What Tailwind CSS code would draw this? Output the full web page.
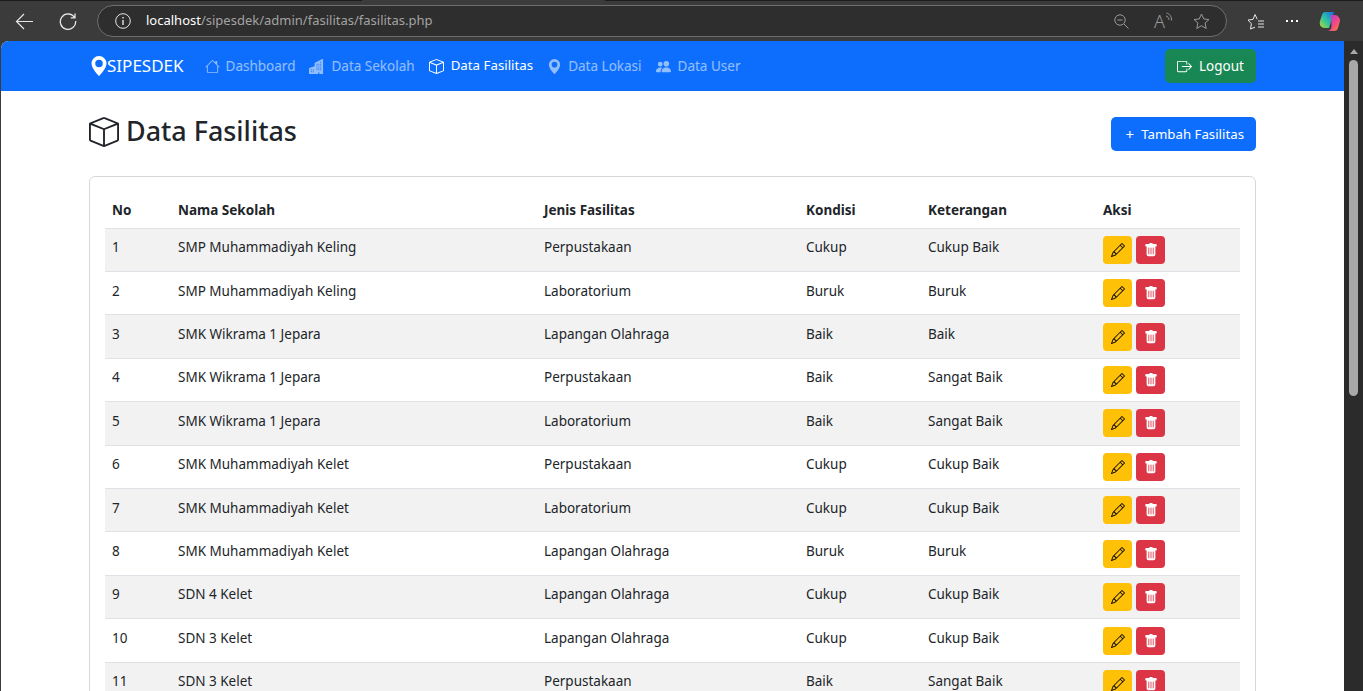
<!DOCTYPE html>
<html lang="en">
<head>
  <meta charset="UTF-8" />
  <title>Data Fasilitas</title>
  <script src="https://cdn.jsdelivr.net/npm/@tailwindcss/browser@4"></script>
</head>
<body class="h-screen overflow-hidden bg-[#3b3b3b] font-['Noto_Sans',sans-serif] text-[13.5px] text-[#212529]">
  <!-- Browser toolbar -->
  <div class="h-px flex"><div class="w-[362px] bg-[#1c1c1c]"></div><div class="w-[243px]"></div><div class="flex-1 bg-[#1c1c1c]"></div></div>
  <div class="h-[40px] flex items-center text-[#e6e6e6]">
    <svg class="ml-[15px] w-[19px] h-[19px]" viewBox="0 0 19 19" fill="none" stroke="currentColor" stroke-width="1.2"><path d="M18 9.500H1.500M9 2 1.500 9.500 9 17"/></svg>
    <svg class="ml-[25px] w-[18px] h-[18px]" viewBox="0 0 18 18" fill="none" stroke="currentColor" stroke-width="1.3"><path d="M15.500 5.500A7.700 7.700 0 1 0 16.700 9M16 1.500v4.300h-4.300"/></svg>
    <div class="ml-[20px] w-[1130px] h-[32px] rounded-full border border-[#6e6e6e] bg-[#2e2e2e] flex items-center">
      <svg class="ml-[17px] w-[16px] h-[16px]" viewBox="0 0 16 16" fill="none" stroke="currentColor"><circle cx="8" cy="8" r="7.300"/><path d="M8 7v5M8 4v1.500" stroke-width="1.400"/></svg>
      <span class="ml-[15px] text-[13px] text-white">localhost<span class="text-[#a3a3a3]">/sipesdek/admin/fasilitas/fasilitas.php</span></span>
      <svg class="ml-auto w-[15px] h-[15px] text-[#9a9a9a]" viewBox="0 0 15 15" fill="none" stroke="currentColor"><circle cx="6" cy="6" r="5.200"/><path d="M3.500 6h5M10 10l4.500 4.500"/></svg>
      <span class="ml-[25px] text-[18px] leading-none font-light text-[#9a9a9a]">A</span>
      <svg class="mb-[8px] w-[8px] h-[10px] text-[#9a9a9a]" viewBox="0 0 8 10" fill="none" stroke="currentColor"><path d="M1 4c1.700.3 2.800 1.800 3.100 4M1.500 1c3 .5 5 3.400 5.200 7.500"/></svg>
      <svg class="ml-[20px] mr-[16px] w-[17px] h-[17px] text-[#9a9a9a]" viewBox="0 0 17 17" fill="none" stroke="currentColor"><path d="m8.500 1 2.300 5 5.200.5-3.900 3.500 1.100 5.500-4.700-2.800L3.800 15.500 4.900 10 1 6.500 6.200 6z"/></svg>
    </div>
    <svg class="ml-[20px] w-[17px] h-[17px]" viewBox="0 0 17 17" fill="none" stroke="currentColor"><path d="M8 14.200 3.500 16l.9-5.200L1 7l5-.6L8 1.500l2.200 4.700M11 8h6M11 11h6M11 14h6"/></svg>
    <div class="ml-[22px] flex gap-[3px]"><i class="w-[2px] h-[2px] bg-white"></i><i class="w-[2px] h-[2px] bg-white"></i><i class="w-[2px] h-[2px] bg-white"></i></div>
    <svg class="ml-[21px] w-[22px] h-[22px]" viewBox="0 0 22 22">
      <defs>
        <linearGradient id="cpa" x1="0" y1="1" x2="1" y2="0"><stop offset="0" stop-color="#b6d92e"/><stop offset=".45" stop-color="#2fc4a0"/><stop offset="1" stop-color="#1668e8"/></linearGradient>
        <linearGradient id="cpb" x1="0" y1="0" x2="1" y2="1"><stop offset="0" stop-color="#a33be0"/><stop offset=".55" stop-color="#f0468c"/><stop offset="1" stop-color="#f78a2a"/></linearGradient>
      </defs>
      <path d="M6 2h9l-5 16H6C2 18 0 15 1 11l2-6c.5-2 1.500-3 3-3z" fill="url(#cpa)"/>
      <path d="M12 5h4c3 0 5 3 5 6l-2 7c-.5 2-2 3-4 3H8c3 0 4-2 4.500-4z" fill="url(#cpb)"/>
    </svg>
  </div>

  <div class="flex h-[650px]">
    <!-- Page -->
    <div class="ml-px w-[1343px] bg-white rounded-tl-lg overflow-hidden">
      <nav class="h-[50px] bg-[#0d6efd] flex items-center pl-[90px] pr-[88px]">
        <a class="flex items-center text-white text-[17px]">
          <svg class="w-[16px] h-[20px]" viewBox="2 0 12 16" fill="currentColor"><path d="M8 16s6-5.686 6-10A6 6 0 0 0 2 6c0 4.314 6 10 6 10zm0-7a3 3 0 1 1 0-6 3 3 0 0 1 0 6z"/></svg>SIPESDEK
        </a>
        <div class="ml-[21px] flex items-center gap-[14px] text-white/55">
          <a class="flex items-center gap-[6px]"><svg class="w-[15px] h-[15px]" viewBox="0 0 16 16" fill="currentColor"><path d="M8.707 1.500a1 1 0 0 0-1.414 0L.646 8.146a.5.5 0 0 0 .708.708L2 8.207V13.500A1.500 1.500 0 0 0 3.500 15h9a1.500 1.500 0 0 0 1.500-1.500V8.207l.646.647a.5.5 0 0 0 .708-.708L13 5.793V2.500a.5.5 0 0 0-.5-.5h-1a.5.5 0 0 0-.5.5v1.293L8.707 1.500ZM13 7.207V13.500a.5.5 0 0 1-.5.5h-9a.5.5 0 0 1-.5-.5V7.207l5-5 5 5Z"/></svg>Dashboard</a>
          <a class="flex items-center gap-[7px]"><svg class="w-[15px] h-[15px]" viewBox="0 0 16 16" fill="currentColor"><path d="M15 .5a.5.5 0 0 0-.724-.447l-8 4A.5.5 0 0 0 6 4.500v3.140L.342 9.526A.5.5 0 0 0 0 10v5.500a.5.5 0 0 0 .5.5h9a.5.5 0 0 0 .5-.5V14h1v1.500a.5.5 0 0 0 .5.5h3a.5.5 0 0 0 .5-.5V.5ZM2 11h1v1H2v-1Zm2 0h1v1H4v-1Zm-1 2v1H2v-1h1Zm1 0h1v1H4v-1Zm9-10v1h-1V3h1ZM8 5h1v1H8V5Zm1 2v1H8V7h1ZM8 9h1v1H8V9Zm2 0h1v1h-1V9Zm-1 2v1H8v-1h1Zm1 0h1v1h-1v-1Zm3-2v1h-1V9h1Zm-1 2h1v1h-1v-1Zm-2-4h1v1h-1V7Zm3 0v1h-1V7h1Zm-2-2v1h-1V5h1Zm1 0h1v1h-1V5Z"/></svg>Data Sekolah</a>
          <a class="flex items-center gap-[7px] text-white text-[13.3px]"><svg class="w-[15px] h-[15px]" viewBox="0 0 16 16" fill="currentColor"><path d="M8.186 1.113a.5.5 0 0 0-.372 0L1.846 3.500 8 5.961 14.154 3.500 8.186 1.113zM15 4.239l-6.500 2.600v7.922l6.500-2.600V4.240zM7.500 14.762V6.838L1 4.239v7.923l6.500 2.600zM7.443.184a1.500 1.500 0 0 1 1.114 0l7.129 2.852A.5.5 0 0 1 16 3.500v8.662a1 1 0 0 1-.629.928l-7.185 2.874a.5.5 0 0 1-.372 0L.63 13.090a1 1 0 0 1-.63-.928V3.500a.5.5 0 0 1 .314-.464L7.443.184z"/></svg>Data Fasilitas</a>
          <a class="flex items-center gap-[6px]"><svg class="w-[15px] h-[15px]" viewBox="0 0 16 16" fill="currentColor"><path d="M8 16s6-5.686 6-10A6 6 0 0 0 2 6c0 4.314 6 10 6 10zm0-7a3 3 0 1 1 0-6 3 3 0 0 1 0 6z"/></svg>Data Lokasi</a>
          <a class="flex items-center gap-[7px]"><svg class="w-[15px] h-[15px]" viewBox="0 0 16 16" fill="currentColor"><path d="M7 14s-1 0-1-1 1-4 5-4 5 3 5 4-1 1-1 1H7Zm4-6a3 3 0 1 0 0-6 3 3 0 0 0 0 6Zm-5.784 6A2.238 2.238 0 0 1 5 13c0-1.355.68-2.750 1.936-3.720A6.325 6.325 0 0 0 5 9c-4 0-5 3-5 4s1 1 1 1h4.216ZM4.500 8a2.500 2.500 0 1 0 0-5 2.500 2.500 0 0 0 0 5Z"/></svg>Data User</a>
        </div>
        <a class="ml-auto h-[34px] w-[91px] rounded-[5px] bg-[#198754] text-white flex items-center justify-center gap-[7px]"><svg class="w-[15px] h-[15px]" viewBox="0 0 16 16" fill="currentColor"><path d="M10 12.500a.5.5 0 0 1-.5.5h-8a.5.5 0 0 1-.5-.5v-9a.5.5 0 0 1 .5-.5h8a.5.5 0 0 1 .5.5v2a.5.5 0 0 0 1 0v-2A1.500 1.500 0 0 0 9.500 2h-8A1.500 1.500 0 0 0 0 3.500v9A1.500 1.500 0 0 0 1.500 14h8a1.500 1.500 0 0 0 1.500-1.500v-2a.5.5 0 0 0-1 0v2z"/><path d="M15.854 8.354a.5.5 0 0 0 0-.708l-3-3a.5.5 0 0 0-.708.708L14.293 7.500H5.500a.5.5 0 0 0 0 1h8.793l-2.147 2.146a.5.5 0 0 0 .708.708l3-3z"/></svg>Logout</a>
      </nav>

      <main class="pl-[88px] pr-[88px]">
        <div class="h-[85px] flex items-center justify-between">
          <h1 class="flex items-center gap-[7px] text-[26.9px] font-medium leading-none -mt-[4px]">
            <svg class="w-[30px] h-[30px]" viewBox="0 0 16 16" fill="currentColor"><path d="M8.186 1.113a.5.5 0 0 0-.372 0L1.846 3.500 8 5.961 14.154 3.500 8.186 1.113zM15 4.239l-6.500 2.600v7.922l6.500-2.600V4.240zM7.500 14.762V6.838L1 4.239v7.923l6.500 2.600zM7.443.184a1.500 1.500 0 0 1 1.114 0l7.129 2.852A.5.5 0 0 1 16 3.500v8.662a1 1 0 0 1-.629.928l-7.185 2.874a.5.5 0 0 1-.372 0L.63 13.090a1 1 0 0 1-.63-.928V3.500a.5.5 0 0 1 .314-.464L7.443.184z"/></svg>
            Data Fasilitas
          </h1>
          <a class="h-[34px] w-[145px] rounded-[5px] bg-[#0d6efd] text-white text-[13.25px] flex items-center justify-end gap-[7px] pr-[11px] pt-[2px]"><span class="text-[15px] leading-none">+</span><span class="mr-px">Tambah Fasilitas</span></a>
        </div>
        <div class="border border-[#d5d8db] rounded-[6px] px-[15px] pt-[17px] pb-[15px]">
          <table class="w-[1135px] table-fixed border-collapse">
            <thead>
              <tr class="h-[34px] text-left font-bold border-b border-[#dee2e6]">
                <th class="w-[65px] pl-[7px] pb-[2px]">No</th>
                <th class="w-[366px] pl-[8px] pb-[2px]">Nama Sekolah</th>
                <th class="w-[262px] pl-[8px] pb-[2px]">Jenis Fasilitas</th>
                <th class="w-[122px] pl-[8px] pb-[2px]">Kondisi</th>
                <th class="w-[175px] pl-[8px] pb-[2px]">Keterangan</th>
                <th class="w-[145px] pl-[8px] pb-[2px]">Aksi</th>
              </tr>
            </thead>
            <tbody id="rows"></tbody>
          </table>
        </div>
      </main>
    </div>

    <!-- Scrollbar -->
    <div class="w-[19px] bg-[#2b2b2b] flex flex-col items-center pt-[8px]">
      <div class="w-0 h-0 border-x-[4px] border-x-transparent border-b-[5px] border-b-[#a8a8a8]"></div>
      <div class="mt-[6px] w-[9px] h-[336px] rounded-full bg-[#a8a8a8]"></div>
    </div>
  </div>

  <script>
    const data = [
      ["SMP Muhammadiyah Keling", "Perpustakaan", "Cukup", "Cukup Baik"],
      ["SMP Muhammadiyah Keling", "Laboratorium", "Buruk", "Buruk"],
      ["SMK Wikrama 1 Jepara", "Lapangan Olahraga", "Baik", "Baik"],
      ["SMK Wikrama 1 Jepara", "Perpustakaan", "Baik", "Sangat Baik"],
      ["SMK Wikrama 1 Jepara", "Laboratorium", "Baik", "Sangat Baik"],
      ["SMK Muhammadiyah Kelet", "Perpustakaan", "Cukup", "Cukup Baik"],
      ["SMK Muhammadiyah Kelet", "Laboratorium", "Cukup", "Cukup Baik"],
      ["SMK Muhammadiyah Kelet", "Lapangan Olahraga", "Buruk", "Buruk"],
      ["SDN 4 Kelet", "Lapangan Olahraga", "Cukup", "Cukup Baik"],
      ["SDN 3 Kelet", "Lapangan Olahraga", "Cukup", "Cukup Baik"],
      ["SDN 3 Kelet", "Perpustakaan", "Baik", "Sangat Baik"],
    ];
    const pencil = '<svg class="w-[14px] h-[14px]" viewBox="0 0 16 16" fill="currentColor"><path d="M12.146.146a.5.5 0 0 1 .708 0l3 3a.5.5 0 0 1 0 .708l-10 10a.5.5 0 0 1-.168.11l-5 2a.5.5 0 0 1-.65-.65l2-5a.5.5 0 0 1 .11-.168l10-10zM11.207 2.500 13.500 4.793 14.793 3.500 12.500 1.207 11.207 2.500zm1.586 3L10.500 3.207 4 9.707V10h.5a.5.5 0 0 1 .5.5v.5h.5a.5.5 0 0 1 .5.5v.5h.293l6.500-6.500zm-9.761 5.175-.106.106-1.528 3.821 3.821-1.528.106-.106A.5.5 0 0 1 5 12.500V12h-.5a.5.5 0 0 1-.5-.5V11h-.5a.5.5 0 0 1-.468-.325z"/></svg>';
    const trash = '<svg class="w-[14px] h-[14px]" viewBox="0 0 16 16" fill="currentColor"><path d="M2.500 1a1 1 0 0 0-1 1v1a1 1 0 0 0 1 1H3v9a2 2 0 0 0 2 2h6a2 2 0 0 0 2-2V4h.5a1 1 0 0 0 1-1V2a1 1 0 0 0-1-1H10a1 1 0 0 0-1-1H7a1 1 0 0 0-1 1H2.500zm3 4a.5.5 0 0 1 .5.5v7a.5.5 0 0 1-1 0v-7a.5.5 0 0 1 .5-.5zM8 5a.5.5 0 0 1 .5.5v7a.5.5 0 0 1-1 0v-7A.5.5 0 0 1 8 5zm3 .5v7a.5.5 0 0 1-1 0v-7a.5.5 0 0 1 1 0z"/></svg>';
    document.getElementById("rows").innerHTML = data.map((r, i) => `
      <tr class="h-[43.43px] border-b border-[#dee2e6] ${i % 2 == 0 ? "bg-[#f2f2f2]" : ""}">
        <td class="pl-[7px] pb-[5px]">${i + 1}</td>
        <td class="pl-[8px] pb-[5px]">${r[0]}</td>
        <td class="pl-[8px] pb-[5px]">${r[1]}</td>
        <td class="pl-[8px] pb-[5px]">${r[2]}</td>
        <td class="pl-[8px] pb-[5px]">${r[3]}</td>
        <td class="pl-[8px]">
          <div class="flex gap-[4px]">
            <a class="w-[29px] h-[28px] rounded-[4px] bg-[#ffc107] text-black flex items-center justify-center">${pencil}</a>
            <a class="w-[29px] h-[28px] rounded-[4px] bg-[#dc3545] text-white flex items-center justify-center">${trash}</a>
          </div>
        </td>
      </tr>`).join("");
  </script>
</body>
</html>
